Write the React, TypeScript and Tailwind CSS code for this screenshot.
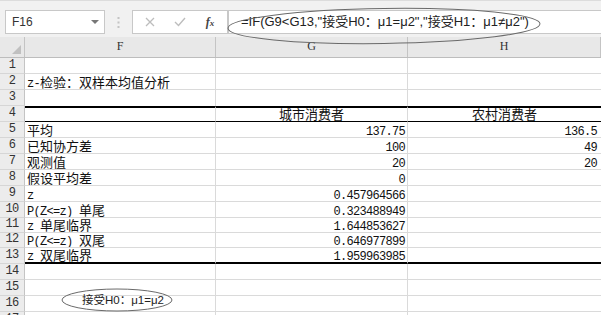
import React from "react";

const MONO = '"Liberation Mono", "DejaVu Sans Mono", monospace';
const CJK = '"Noto Sans CJK SC", "Noto Sans", sans-serif';

function Mixed({ text }: { text: string }) {
  const runs = text.match(/[\u0000-\u00ff]+|[^\u0000-\u00ff]+/g) || [];
  return (
    <span className="block leading-[15px] h-[15px] whitespace-nowrap">
      {runs.map((r, i) =>
        /^[\u0000-\u00ff]+$/.test(r) ? (
          <span
            key={i}
            className="whitespace-pre text-[12px] tracking-[-0.7px] leading-[15px]"
            style={{ fontFamily: MONO }}
          >
            {r}
          </span>
        ) : (
          <span key={i} className="text-[13px] leading-[15px]" style={{ fontFamily: CJK }}>
            {r}
          </span>
        )
      )}
    </span>
  );
}

type Row = { f?: string; g?: string; h?: string; center?: boolean };

const rows: Row[] = [
  {},
  { f: "z-检验：双样本均值分析" },
  {},
  { g: "城市消费者", h: "农村消费者", center: true },
  { f: "平均", g: "137.75", h: "136.5" },
  { f: "已知协方差", g: "100", h: "49" },
  { f: "观测值", g: "20", h: "20" },
  { f: "假设平均差", g: "0" },
  { f: "z", g: "0.457964566" },
  { f: "P(Z<=z) 单尾", g: "0.323488949" },
  { f: "z 单尾临界", g: "1.644853627" },
  { f: "P(Z<=z) 双尾", g: "0.646977899" },
  { f: "z 双尾临界", g: "1.959963985" },
  {},
  {},
  {},
  {},
];

const heights = [16, 16, 16, 16, 16, 16, 16, 16, 16, 16, 15, 15, 16, 16, 16, 16, 16];

function borderFor(i: number) {
  if (i === 2) return "border-b-0";
  if (i === 3) return "border-t-2 border-t-black border-b border-b-black";
  if (i === 12) return "border-b-2 border-b-black";
  return "border-b border-b-[#dadada]";
}

export default function App() {
  return (
    <div className="relative w-[601px] h-[315px] overflow-hidden bg-white text-[#111]">
      {/* formula bar */}
      <div className="h-[37px] bg-[#f1f1f1] border-t border-[#dcdcdc] flex items-start pt-[9px]">
        <div className="ml-[5px] w-[100px] h-[24px] bg-white border border-[#c8c8c8] flex items-center justify-between pl-[6px] pr-[5px]">
          <span className="text-[12px] text-[#333]" style={{ fontFamily: '"Liberation Sans", Arial, sans-serif' }}>
            F16
          </span>
          <svg width="8" height="5" viewBox="0 0 8 5">
            <path d="M0 0 L8 0 L4 4 Z" fill="#777" />
          </svg>
        </div>
        <div className="w-[27px] h-[24px] flex items-center justify-center">
          <svg width="3" height="11" viewBox="0 0 3 11">
            <rect x="0.5" y="0" width="2" height="2" fill="#c4c4c4" />
            <rect x="0.5" y="4.5" width="2" height="2" fill="#c4c4c4" />
            <rect x="0.5" y="9" width="2" height="2" fill="#c4c4c4" />
          </svg>
        </div>
        <div className="w-[96px] h-[24px] bg-white border border-[#c8c8c8] flex items-center">
          <div className="w-[34px] flex justify-center">
            <svg width="10" height="10" viewBox="0 0 10 10">
              <path d="M1 1 L9 9 M9 1 L1 9" stroke="#bdbdbd" strokeWidth="1.3" />
            </svg>
          </div>
          <div className="w-[26px] flex justify-center">
            <svg width="12" height="10" viewBox="0 0 12 10">
              <path d="M1 5 L4.5 8.5 L11 1" stroke="#bdbdbd" strokeWidth="1.4" fill="none" />
            </svg>
          </div>
          <div className="flex-1 flex justify-center">
            <span
              className="italic text-[12px] text-[#444] font-semibold"
              style={{ fontFamily: '"Liberation Serif", serif' }}
            >
              f<span className="text-[9px]">x</span>
            </span>
          </div>
        </div>
        <div className="flex-1 h-[24px] bg-white border border-r-0 border-[#c8c8c8] flex items-center pl-[12px]">
          <span className="text-[13px] text-[#222] whitespace-pre" style={{ fontFamily: '"Liberation Sans", "Noto Sans CJK SC", sans-serif' }}>
            =IF(G9&lt;G13,"接受H0：μ1=μ2","接受H1：μ1≠μ2")
          </span>
        </div>
      </div>

      {/* column header */}
      <div className="flex h-[21px] bg-[#e8e8e8] border-b border-[#bdbdbd]">
        <div className="w-[25px] h-full border-r border-[#c4c4c4] relative">
          <svg className="absolute right-[3px] bottom-[3px]" width="9" height="9" viewBox="0 0 9 9">
            <path d="M9 0 L9 9 L0 9 Z" fill="#c0c0c0" />
          </svg>
        </div>
        {[
          ["F", 191],
          ["G", 192],
          ["H", 193],
        ].map(([l, w]) => (
          <div
            key={l as string}
            className="h-full border-r border-[#c4c4c4] flex items-end justify-center pb-[2px] text-[12px] text-[#333]"
            style={{ width: w as number, fontFamily: '"Liberation Serif", serif' }}
          >
            {l}
          </div>
        ))}
      </div>

      {/* rows */}
      <div className="flex flex-col">
        {rows.map((r, i) => (
          <div key={i} className="flex" style={{ height: heights[i] }}>
            <div
              className="w-[25px] h-full bg-[#ececec] border-r border-r-[#c4c4c4] border-b border-b-[#d6d6d6] flex items-end justify-center text-[12px] tracking-[-0.7px] leading-[15px] text-[#333]"
              style={{ fontFamily: MONO }}
            >
              {i + 1}
            </div>
            <div
              className={`w-[191px] h-full border-r border-r-[#dadada] ${borderFor(i)} flex items-end pl-[2px] overflow-hidden`}
            >
              {r.f && <Mixed text={r.f} />}
            </div>
            <div
              className={`w-[192px] h-full border-r border-r-[#dadada] ${borderFor(i)} flex items-end ${
                r.center ? "justify-center" : "justify-end pr-[2px]"
              }`}
            >
              {r.g && <Mixed text={r.g} />}
            </div>
            <div
              className={`w-[193px] h-full ${borderFor(i)} flex items-end ${
                r.center ? "justify-center" : "justify-end pr-[4px]"
              }`}
            >
              {r.h && <Mixed text={r.h} />}
            </div>
          </div>
        ))}
      </div>

      {/* annotation overlay */}
      <div
        className="absolute left-[82px] top-[292px] text-[11.5px] leading-[16px] text-[#222] whitespace-pre"
        style={{ fontFamily: '"Liberation Sans", "Noto Sans CJK SC", sans-serif' }}
      >
        接受H0：μ1=μ2
      </div>
      <svg className="absolute left-0 top-0 pointer-events-none" width="601" height="315" viewBox="0 0 601 315">
        <ellipse cx="384" cy="26" rx="156" ry="17.5" fill="none" stroke="#6a6a6a" strokeWidth="1" transform="rotate(-0.8 384 26)" />
        <ellipse cx="117" cy="300" rx="55" ry="11" fill="none" stroke="#6a6a6a" strokeWidth="1" />
      </svg>
    </div>
  );
}
